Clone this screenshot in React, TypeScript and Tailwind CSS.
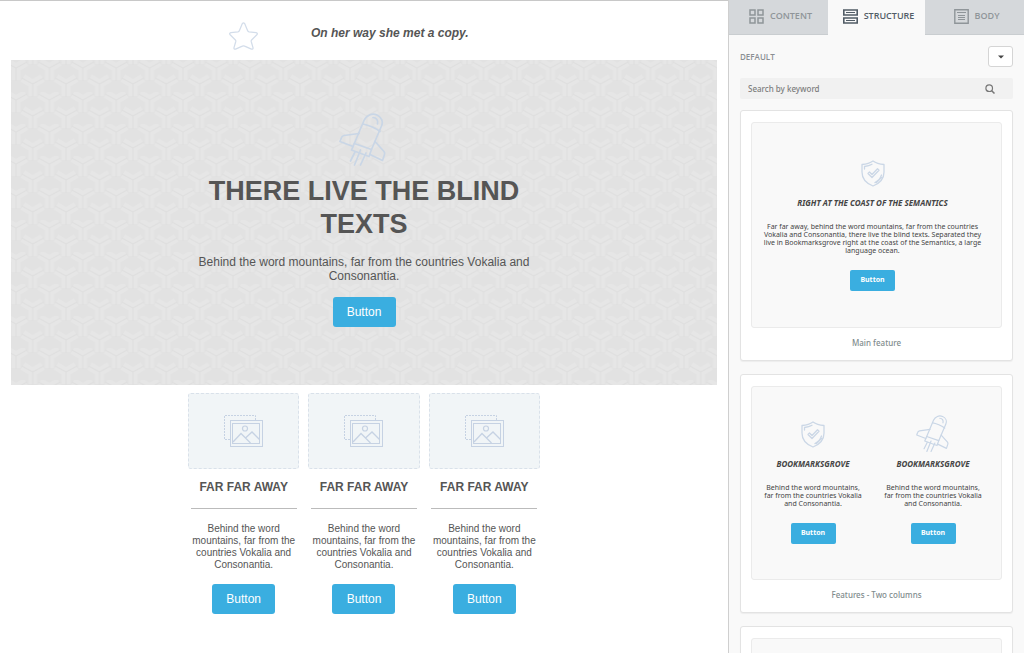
import React from "react";

type IconProps = { className?: string };

function StarIcon({ className }: IconProps) {
  return (
    <svg viewBox="0 0 30 29" className={className} fill="none" stroke="#d3ddea" strokeWidth="1.3" strokeLinejoin="round" aria-hidden="true">
      <path d="M13.8 1.6Q15 0 16.2 1.6L19.4 9.2Q19.8 10 20.8 10.2L28 11Q30.2 11.6 28.8 13.2L23.4 18.6Q22.8 19.3 23 20.2L24.9 26.8Q25 28.6 23.2 28.1L16.2 25Q15 24.4 13.8 25L6.800 28.100Q5 28.600 5.100 26.800L7 20.200Q7.200 19.300 6.600 18.600L1.200 13.200Q-.2 11.600 2 11L9.200 10.200Q10.200 10 10.600 9.200Z" />
    </svg>
  );
}

function RocketIcon({ className }: IconProps) {
  return (
    <svg viewBox="0 0 50 54" className={className} fill="none" stroke="#c9d6e6" strokeWidth="1.7" strokeLinejoin="round" strokeLinecap="round" aria-hidden="true">
      <path d="M15.300 30.500L25 7.500C27.500 2 33 0 38 2C42.500 4 44.500 8.500 42.500 13L32.500 36.500Z" />
      <path d="M24 11C28 11.500 37.500 15.500 41 18.500" />
      <path d="M34 4.500C37.500 4.500 39.500 7.500 38.500 11" />
      <path d="M15.300 30.500L12.500 37L30 43.500L32.500 36.500" />
      <path d="M20 20.500L5 22.500Q3 23 2.500 24.500L1 28.500L14 33.500" />
      <path d="M36 28.500L45 38.500Q46 40 45.500 41.500L43.500 47.500L31 41.500" />
      <path d="M16 39L11.500 48M21.500 37L15.500 52M27 40L21.500 52" />
    </svg>
  );
}

function ShieldIcon({ className }: IconProps) {
  return (
    <svg viewBox="0 0 24 27" className={className} fill="none" stroke="#cbd7e6" strokeWidth="1.3" strokeLinejoin="round" strokeLinecap="round" aria-hidden="true">
      <path d="M12 1C8.500 3.500 4.500 4.200 1 4.500V12C1 19 5.500 23.500 12 26C18.500 23.500 23 19 23 12V4.500C19.500 4.200 15.500 3.500 12 1Z" />
      <path d="M3.500 9V6.500C6.500 6.200 9 5.500 11 4.300M20.500 15C19.500 18.500 17.200 21 14 22.600M20.500 17.500L15.500 22.500" />
      <path d="M7 13.500L8.500 12L11 14.500L16.500 8.700L18 10.200L11 17.500Z" />
    </svg>
  );
}

function PictureIcon({ className }: IconProps) {
  return (
    <svg viewBox="0 0 39 32" className={className} fill="none" stroke="#c6d2e3" strokeWidth="1" aria-hidden="true">
      <path d="M6 24.500H.5V.5H31.500V5" strokeDasharray="2 1" />
      <rect x="6.500" y="5.500" width="32" height="26" />
      <rect x="8.500" y="8.500" width="27" height="20" />
      <circle cx="21" cy="13.500" r="2.500" strokeWidth="1.200" />
      <path d="M9 27L17 18.500L26.500 28M21.500 23L28 17L35.500 24.500" strokeWidth="1.300" />
    </svg>
  );
}

function GridIcon() {
  return (
    <svg viewBox="0 0 15 15" className="size-[15px]" fill="none" stroke="currentColor" strokeWidth="1.500" aria-hidden="true">
      <path d="M1 1H6V6H1ZM9 1H14V6H9ZM1 9H6V14H1ZM9 9H14V14H9Z" />
    </svg>
  );
}

function RowsIcon() {
  return (
    <svg viewBox="0 0 15 15" className="size-[15px]" fill="none" stroke="currentColor" strokeWidth="1.600" aria-hidden="true">
      <path d="M.8 1H14.200V6H.8ZM.8 9H14.200V14H.8Z" />
      <path d="M3 3.500H12M3 11.500H12" strokeWidth="1" />
    </svg>
  );
}

function DocumentIcon() {
  return (
    <svg viewBox="0 0 15 15" className="size-[15px]" fill="none" stroke="currentColor" strokeWidth="1.400" aria-hidden="true">
      <path d="M.8.8H14.200V14.200H.8Z" />
      <path d="M3 3.500H12M4 6.500H11M4 8.500H11M4 10.500H11" strokeWidth="1" />
    </svg>
  );
}

function WeavePattern() {
  return (
    <svg className="absolute inset-0 -z-10 size-full" aria-hidden="true">
      <defs>
        <g id="weave-y" fill="none">
          <path d="M0 0V12M0 0L-10 -6M0 0L10 -6" stroke="#e6e6e6" strokeWidth="9" />
          <path d="M0 0V13M0 0L-11 -6M0 0L11 -6" stroke="#dfdfdf" strokeWidth="1" />
        </g>
        <pattern id="weave" width="33.400" height="32" patternUnits="userSpaceOnUse" x="5" y="0">
          <rect width="34" height="32" fill="#e2e2e2" />
          <use href="#weave-y" x="0" y="8" />
          <use href="#weave-y" x="33.400" y="8" />
          <use href="#weave-y" x="16.700" y="24" />
          <use href="#weave-y" x="16.700" y="-8" />
        </pattern>
      </defs>
      <rect width="100%" height="100%" fill="url(#weave)" />
    </svg>
  );
}

function CanvasButton() {
  return (
    <button type="button" className="h-[30px] w-[63px] rounded-[3px] bg-[#3aaee0] text-xs text-white">
      Button
    </button>
  );
}

function FeatureColumn() {
  return (
    <article className="flex flex-col items-center text-center">
      <div className="flex h-[76px] w-full items-center justify-center rounded-[3px] border border-dashed border-[#d9e1ea] bg-[#f1f5f7]">
        <PictureIcon className="h-8 w-[39px]" />
      </div>
      <h2 className="mt-[11px] text-xs leading-[14px] font-bold whitespace-nowrap">FAR FAR AWAY</h2>
      <hr className="mt-[14px] w-[106px] border-t border-[#bbbbbb]" />
      <p className="mt-[14px] w-[106px] text-[10px] leading-[12px]">
        Behind the word mountains, far from the countries Vokalia and Consonantia.
      </p>
      <div className="mt-[13px] flex">
        <CanvasButton />
      </div>
    </article>
  );
}

function PreviewButton() {
  return (
    <button type="button" className="h-[21px] w-[45px] rounded-[2px] bg-[#3aaee0] text-[7px] font-bold text-white">
      Button
    </button>
  );
}

type FeatureProps = { icon: React.ReactNode; title: string; text: string };

function PreviewFeature({ icon, title, text }: FeatureProps) {
  return (
    <div className="flex flex-1 flex-col items-center text-center text-[#444444]">
      <div className="flex h-10 items-center">{icon}</div>
      <h3 className="mt-1 text-[8px] leading-[12px] font-bold whitespace-nowrap italic">{title}</h3>
      <p className="mt-[14px] text-[7px] leading-[8px]">{text}</p>
      <div className="mt-[15px] flex">
        <PreviewButton />
      </div>
    </div>
  );
}

type CardProps = { caption?: string; children?: React.ReactNode; boxClass: string };

function StructureCard({ caption, children, boxClass }: CardProps) {
  return (
    <section className="rounded-[3px] border border-[#e3e3e3] bg-white px-[10px] pt-[11px] pb-[11px] shadow-[0_1px_1px_rgba(0,0,0,0.05)]">
      <div className={`flex rounded-[3px] border border-[#ebebeb] bg-[#f9f9f9] ${boxClass}`}>{children}</div>
      {caption && <p className="mt-[9px] text-center text-[8px] leading-[12px] font-medium text-[#7f8c8d]">{caption}</p>}
    </section>
  );
}

const shortText = "Behind the word mountains, far from the countries Vokalia and Consonantia.";

export default function App() {
  return (
    <div className="flex h-screen overflow-hidden bg-white">
      <main className="min-w-0 flex-1 overflow-hidden border-t border-[#c8c8c8] px-[11px] font-['Liberation_Sans',Arial,sans-serif] text-[#555555]">
        <header className="mx-auto flex h-[59px] w-[352px]">
          <div className="flex w-[111px] justify-center pt-[21px]">
            <StarIcon className="h-[28px] w-[31px]" />
          </div>
          <p className="pt-6 pl-3 text-xs leading-[16px] font-bold italic">On her way she met a copy.</p>
        </header>

        <section className="relative isolate flex flex-col items-center pt-[53px] pb-[58px] text-center">
          <WeavePattern />
          <RocketIcon className="h-[54px] w-[50px]" />
          <h1 className="mt-2 w-[352px] text-[27px] leading-[33px] font-bold">THERE LIVE THE BLIND TEXTS</h1>
          <p className="mt-[14px] w-[340px] text-xs leading-[14px]">{shortText}</p>
          <div className="mt-[14px] flex">
            <CanvasButton />
          </div>
        </section>

        <section className="mx-auto mt-2 grid w-[352px] grid-cols-3 gap-[9px]">
          <FeatureColumn />
          <FeatureColumn />
          <FeatureColumn />
        </section>
      </main>

      <aside className="flex w-[296px] shrink-0 flex-col border-l border-[#cfcfcf] bg-[#f9f9f9] font-['Noto_Sans',sans-serif]">
        <nav className="grid h-[35px] shrink-0 grid-cols-[1fr_97px_1fr] font-['Open_Sans','Noto_Sans',sans-serif] text-[9px] font-semibold text-[#8f9599]">
          <button type="button" className="flex items-center justify-center gap-[6px] border-b border-[#c9cdd0] bg-[#d5d8db] pb-[2px] pl-1">
            <GridIcon />
            CONTENT
          </button>
          <button type="button" className="flex items-center justify-center gap-[6px] border-b border-[#f9f9f9] bg-[#f9f9f9] pb-[2px] pl-1 text-[#515c66]">
            <RowsIcon />
            STRUCTURE
          </button>
          <button type="button" className="flex items-center justify-center gap-[6px] border-b border-[#c9cdd0] bg-[#d5d8db] pb-[2px] pl-1">
            <DocumentIcon />
            BODY
          </button>
        </nav>

        <div className="flex flex-col px-[11px] pt-[11px]">
          <div className="flex items-center justify-between">
            <span className="font-['Open_Sans','Noto_Sans',sans-serif] text-[8px] font-semibold text-[#8a8f93]">DEFAULT</span>
            <button type="button" aria-label="Choose category" className="flex h-[21px] w-[25px] items-center justify-center rounded-[3px] border border-[#d5d5d5] bg-white">
              <svg viewBox="0 0 6 4" className="h-1 w-[6px]" fill="#444444" aria-hidden="true">
                <path d="M0 .5H6L3 3.500Z" />
              </svg>
            </button>
          </div>

          <label className="mt-[11px] flex h-[21px] items-center rounded-[2px] bg-[#f1f1f1] pr-[18px] pl-2">
            <input
              type="text"
              aria-label="Search by keyword"
              placeholder="Search by keyword"
              className="min-w-0 flex-1 bg-transparent text-[8px] font-medium text-[#777777] outline-none placeholder:text-[#7d7d7d]"
            />
            <svg viewBox="0 0 10 10" className="size-[10px]" fill="none" stroke="#777777" strokeWidth="1.200" aria-hidden="true">
              <circle cx="4.200" cy="4.200" r="3.300" />
              <path d="M6.700 6.700L9.500 9.500" strokeWidth="1.500" />
            </svg>
          </label>

          <div className="mt-[11px] flex flex-col gap-[13px]">
            <StructureCard caption="Main feature" boxClass="h-[206px] pt-[30px] pr-[18px] pl-[10px]">
              <PreviewFeature
                icon={<ShieldIcon className="h-[27px] w-6" />}
                title="RIGHT AT THE COAST OF THE SEMANTICS"
                text="Far far away, behind the word mountains, far from the countries Vokalia and Consonantia, there live the blind texts. Separated they live in Bookmarksgrove right at the coast of the Semantics, a large language ocean."
              />
            </StructureCard>
            <StructureCard caption="Features - Two columns" boxClass="h-[194px] gap-[18px] pt-[27px] pr-[17px] pl-[10px]">
              <PreviewFeature icon={<ShieldIcon className="h-[27px] w-6" />} title="BOOKMARKSGROVE" text={shortText} />
              <PreviewFeature icon={<RocketIcon className="h-[38px] w-[35px]" />} title="BOOKMARKSGROVE" text={shortText} />
            </StructureCard>
            <StructureCard boxClass="h-[194px]" />
          </div>
        </div>
      </aside>
    </div>
  );
}
